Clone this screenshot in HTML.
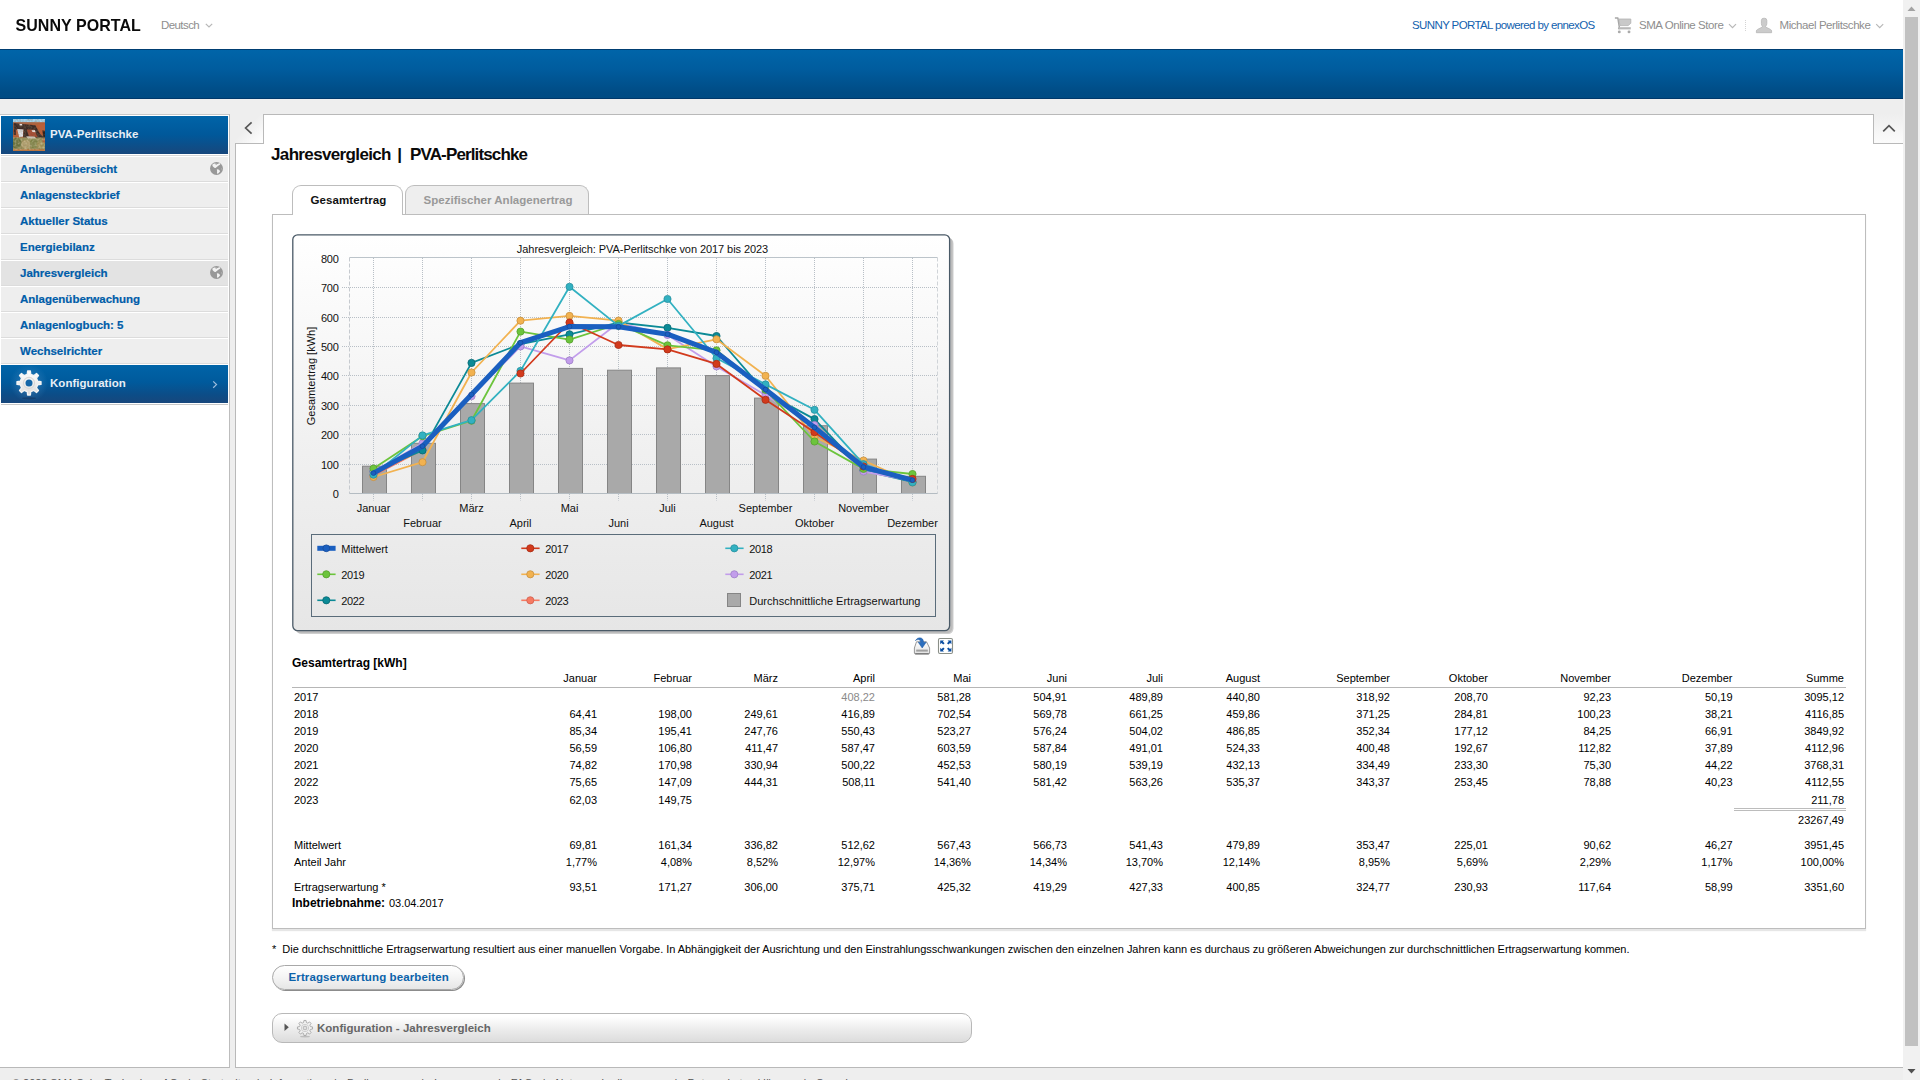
<!DOCTYPE html>
<html lang="de">
<head>
<meta charset="utf-8">
<title>Sunny Portal</title>
<style>
*{box-sizing:border-box;margin:0;padding:0}
html,body{width:1920px;height:1080px;overflow:hidden;background:#eee}
body{position:relative;font-family:"Liberation Sans",sans-serif;font-size:11px;color:#000}
.abs{position:absolute}
/* top header */
#top{position:absolute;left:0;top:0;width:1903px;height:49px;background:#fff}
#bluebar{position:absolute;left:0;top:49px;width:1903px;height:50px;background:linear-gradient(#0065a9 0%,#005c9e 40%,#004c85 88%,#004b83 100%);border-top:1px solid #003e72;border-bottom:1px solid #00386a}
#logo{position:absolute;left:15.5px;top:16px;font-size:16px;font-weight:bold;color:#0a0a0a;letter-spacing:0.05px;line-height:20px;white-space:nowrap;transform:scaleY(1.03);transform-origin:0 15px}
.toptxt{position:absolute;top:18px;font-size:11.5px;line-height:14px;color:#8e8e8e;white-space:nowrap}
/* scrollbar */
#sb{position:absolute;left:1903px;top:0;width:17px;height:1080px;background:#f1f1f1}
#sbthumb{position:absolute;left:2px;top:17px;width:13px;height:1029px;background:#c1c1c1}
/* sidebar */
#side{position:absolute;left:0;top:114px;width:230px;height:954px;border-bottom:1px solid #b9b9b9;background:#fff;border-top:1px solid #c8c8c8;border-right:1px solid #bdbdbd}
#sidehead{position:absolute;left:1px;top:1px;width:227px;height:38px;background:linear-gradient(#0064a8 0%,#00589a 50%,#17477c 100%)}
#sidehead .t{position:absolute;left:49px;top:10px;font-size:11.5px;font-weight:bold;color:#e8eef5;line-height:16px;white-space:nowrap;letter-spacing:0.03px}
.mi{position:absolute;left:1px;width:227px;height:26px;background:#eee;border-top:1px solid #fff;border-bottom:1px solid #dcdcdc;font-weight:bold;font-size:11.5px;color:#005da9;line-height:24px;padding-left:19px;white-space:nowrap;letter-spacing:0px}
.mi.act{background:#e3e3e3}
.mi{-webkit-text-stroke:0.2px #005da9}
#konf{position:absolute;left:1px;top:250px;width:227px;height:38px;overflow:hidden;background:linear-gradient(#0064a8 0%,#005a9c 45%,#0d4c86 80%,#17477c 100%)}
#konf .t{position:absolute;left:49px;top:10px;font-size:11.5px;font-weight:bold;color:#e8eef5;line-height:16px;letter-spacing:0.03px}
/* main */
#main{position:absolute;left:235px;top:143px;width:1668px;height:925px;background:#fff;border-left:1px solid #b9b9b9;border-bottom:1px solid #b9b9b9}
#maintop{position:absolute;left:263px;top:114px;width:1611px;height:30px;background:#fff;border:1px solid #b9b9b9;border-bottom:none}
#notchL{position:absolute;left:235px;top:114px;width:28px;height:30px;background:linear-gradient(135deg,#eee 45%,#fff 100%);border-bottom:1px solid #b9b9b9}
#notchR{position:absolute;left:1874px;top:114px;width:29px;height:30px;background:linear-gradient(#eee,#fbfbfb);border-bottom:1px solid #b9b9b9}
#title{position:absolute;left:271px;top:144px;font-size:17px;font-weight:bold;color:#0a0a0a;line-height:22px;white-space:nowrap;letter-spacing:-0.53px}
.tab{position:absolute;top:185px;height:30px;border:1px solid #bdbdbd;border-bottom:none;border-radius:9px 9px 0 0;font-size:11.5px;font-weight:bold;line-height:28px;text-align:center;white-space:nowrap}
#panel{position:absolute;left:272px;top:214px;width:1594px;height:715px;border:1px solid #bdbdbd;background:#fff;box-shadow:0 2px 1px #e6e6e6}
.tr{position:absolute;left:0;width:1903px;height:14px;line-height:14px;font-size:11px}
.tr .lab{position:absolute;left:294px;white-space:nowrap}
.tr .c{position:absolute;white-space:nowrap;text-align:right}
.gray{color:#8a8a8a}
.globe{position:absolute;left:208px;top:4px}
</style>
</head>
<body>
<div id="top">
  <div id="logo">SUNNY PORTAL</div>
  <div class="toptxt" style="left:161px;letter-spacing:-0.58px">Deutsch</div>
  <div class="toptxt" style="left:1412px;color:#1261ae;letter-spacing:-0.61px">SUNNY PORTAL powered by ennexOS</div>
  <div class="toptxt" style="left:1639px;letter-spacing:-0.44px">SMA Online Store</div>
  <div class="toptxt" style="left:1779.5px;letter-spacing:-0.43px">Michael Perlitschke</div>
  <svg class="abs" style="left:1613px;top:15px" width="20" height="20" viewBox="0 0 20 20"><path d="M1.9 3.1 L4.9 3.1 L6.3 12 L5.6 14.2" fill="none" stroke="#a6a6a6" stroke-width="1.5" stroke-linejoin="round"/><path d="M5.7 4 L17.8 4 L17.8 8.3 L15.1 10.6 L7 10.6Z" fill="#c9c9c9" stroke="#b2b2b2" stroke-width="0.8"/><rect x="5.6" y="12.2" width="12.2" height="2.2" fill="#b8b8b8"/><circle cx="6.3" cy="16.9" r="1.45" fill="#aaa"/><circle cx="16" cy="16.9" r="1.45" fill="#aaa"/></svg>
  <svg class="abs" style="left:1727px;top:22px" width="11" height="8" viewBox="0 0 11 8"><path d="M2 2.2 L5.5 5.7 L9 2.2" fill="none" stroke="#b8b8b8" stroke-width="1.2"/></svg>
  <svg class="abs" style="left:1874px;top:22px" width="11" height="8" viewBox="0 0 11 8"><path d="M2.2 2.2 L5.7 5.7 L9.2 2.2" fill="none" stroke="#b8b8b8" stroke-width="1.2"/></svg>
  <svg class="abs" style="left:204px;top:22px" width="11" height="8" viewBox="0 0 11 8"><path d="M1.8 1.8 L5 5 L8.2 1.8" fill="none" stroke="#b8b8b8" stroke-width="1.2"/></svg>
  <div class="abs" style="left:1745px;top:20px;width:1px;height:12px;background:repeating-linear-gradient(#d4d4d4 0 1px,transparent 1px 2px)"></div>
  <svg class="abs" style="left:1755px;top:17px" width="18" height="17" viewBox="0 0 18 17"><path d="M6.4 3.2 Q6.4 1.2 9.1 1.2 Q11.8 1.2 11.8 3.2 L11.8 6.6 Q11.8 8.4 10.6 9.2 L10.6 10 L15.4 12.4 Q16.6 13 16.6 14 L16.6 15.7 L1.4 15.7 L1.4 14 Q1.4 13 2.6 12.4 L7.4 10 L7.4 9.2 Q6.4 8.4 6.4 6.6Z" fill="#cbcbcb" stroke="#b6b6b6" stroke-width="0.8"/></svg>

</div>
<div id="bluebar"></div>

<div id="side">
  <div id="sidehead"><svg width="32" height="32" viewBox="0 0 32 32" style="position:absolute;left:12px;top:3px"><defs><filter id="tb" x="-10%" y="-10%" width="120%" height="120%"><feGaussianBlur stdDeviation="0.75"/></filter><filter id="tn" x="0" y="0" width="100%" height="100%"><feTurbulence type="fractalNoise" baseFrequency="0.45" numOctaves="2" seed="7"/><feColorMatrix type="matrix" values="0 0 0 0 0.25  0 0 0 0 0.2  0 0 0 0 0.1  1.6 0 0 0 -0.55"/></filter><filter id="tn2" x="0" y="0" width="100%" height="100%"><feTurbulence type="fractalNoise" baseFrequency="0.5" numOctaves="2" seed="3"/><feColorMatrix type="matrix" values="0 0 0 0 0.85  0 0 0 0 0.78  0 0 0 0 0.6  0 1.6 0 0 -0.6"/></filter><clipPath id="tc"><rect width="32" height="32"/></clipPath></defs><g clip-path="url(#tc)"><g filter="url(#tb)"><rect x="-2" y="-2" width="36" height="36" fill="#b95c36"/><rect x="-2" y="-2" width="36" height="5.2" fill="#a8d5f0"/><rect x="-2" y="3.2" width="24" height="1.2" fill="#a87058"/><path d="M0.6 4 L22.4 6.2 L27 14.8 L33 20 L33 23 L24 19.5 L13.4 19 L10.4 10.8 L2.8 10.6 L2.8 16 L0.6 16Z" fill="#3c2a28"/><path d="M13.8 10.4 L21.4 10.8 L24.6 18 L16 17.6Z" fill="#a64a30"/><path d="M6.4 4.8 L9 5 L9.3 6.6 L6.7 6.4Z" fill="#f4ecec"/><path d="M18.6 10.9 L22 11.2 L22.6 13.2 L19.4 13Z" fill="#f0e6e6"/><path d="M4.2 9.9 L10.5 10.5 L10 17.6 L6.2 18.4Z" fill="#e2e2e8"/><path d="M10.6 10.8 L13.4 18.8 L10.2 18.5Z" fill="#2c2020"/><path d="M24.5 5.2 L33 5.2 L33 17.5 L28.2 15Z" fill="#c25c34"/><path d="M29.4 11.2 L32.5 12 L32.5 19.5 L30.2 18.6Z" fill="#30201a"/><rect x="-2" y="18.6" width="36" height="14" fill="#928a52"/><ellipse cx="3.5" cy="24" rx="5" ry="5.5" fill="#66703a"/><ellipse cx="13" cy="25.5" rx="4.6" ry="4.5" fill="#b09e6c"/><ellipse cx="21" cy="24.5" rx="4" ry="5" fill="#7c8244"/><ellipse cx="28" cy="26" rx="4.5" ry="4" fill="#a09254"/><ellipse cx="31.5" cy="21.5" rx="2.2" ry="2.6" fill="#b0643c"/><rect x="-2" y="30.3" width="36" height="3" fill="#c4743e"/><path d="M13.2 17.2 L21.5 17.6 L23 19.4 L14.6 19.6Z" fill="#d6ccc0"/></g><rect width="32" height="32" filter="url(#tn)" opacity="0.55"/><rect y="18" width="32" height="13" filter="url(#tn2)" opacity="0.5"/></g></svg><div class="t">PVA-Perlitschke</div></div>
  <div class="mi" style="top:41px">Anlagenübersicht<svg class="globe" width="15" height="15" viewBox="-7.5 -7.5 15 15"><circle r="6.5" fill="#989898"/><path d="M-4.3-3.7 L-2.4-4.9 L1.2-4.6 L3-5.4 L3.8-3.9 L1.8-2.8 L-0.9-0.5 L-2.3-0.8 L-3.8-2.3Z" fill="#f2f2f2"/><ellipse cx="-0.2" cy="-4.2" rx="1.1" ry="0.45" fill="#a8a8a8"/><path d="M0.3 0.9 L1.5 0.7 L2.6 1.6 L3.6 2.4 L3.3 3.3 L2.2 4.4 L1 5.5 L0.5 4.2 L0.6 2.6Z" fill="#f2f2f2"/><circle cx="5.1" cy="0.4" r="0.6" fill="#b8b8b8"/></svg></div>
  <div class="mi" style="top:67px">Anlagensteckbrief</div>
  <div class="mi" style="top:93px">Aktueller Status</div>
  <div class="mi" style="top:119px">Energiebilanz</div>
  <div class="mi act" style="top:145px">Jahresvergleich<svg class="globe" width="15" height="15" viewBox="-7.5 -7.5 15 15"><circle r="6.5" fill="#989898"/><path d="M-4.3-3.7 L-2.4-4.9 L1.2-4.6 L3-5.4 L3.8-3.9 L1.8-2.8 L-0.9-0.5 L-2.3-0.8 L-3.8-2.3Z" fill="#f2f2f2"/><ellipse cx="-0.2" cy="-4.2" rx="1.1" ry="0.45" fill="#a8a8a8"/><path d="M0.3 0.9 L1.5 0.7 L2.6 1.6 L3.6 2.4 L3.3 3.3 L2.2 4.4 L1 5.5 L0.5 4.2 L0.6 2.6Z" fill="#f2f2f2"/><circle cx="5.1" cy="0.4" r="0.6" fill="#b8b8b8"/></svg></div>
  <div class="mi" style="top:171px">Anlagenüberwachung</div>
  <div class="mi" style="top:197px">Anlagenlogbuch: 5</div>
  <div class="mi" style="top:223px">Wechselrichter</div>
  <div class="abs" style="left:1px;top:40px;width:227px;height:1px;background:#d8d8d8"></div><div class="abs" style="left:1px;top:289px;width:227px;height:1px;background:#c8c8c8"></div><div id="konf"><svg width="40" height="40" viewBox="-20 -20 40 40" style="position:absolute;left:8px;top:-2px"><defs><radialGradient id="gg"><stop offset="0" stop-color="#5a9ad0" stop-opacity="0.55"/><stop offset="1" stop-color="#5a9ad0" stop-opacity="0"/></radialGradient><linearGradient id="gw" x1="0" y1="0" x2="0" y2="1"><stop offset="0" stop-color="#ffffff"/><stop offset="1" stop-color="#dcdcdc"/></linearGradient></defs><circle r="19" fill="url(#gg)"/><ellipse cx="0" cy="15.3" rx="7" ry="1.1" fill="#123a66" opacity="0.7"/><path d="M-1.77 -8.72 L-1.39 -12.02 L1.39 -12.02 L1.77 -8.72 L4.92 -7.42 L7.52 -9.48 L9.48 -7.52 L7.42 -4.92 L8.72 -1.77 L12.02 -1.39 L12.02 1.39 L8.72 1.77 L7.42 4.92 L9.48 7.52 L7.52 9.48 L4.92 7.42 L1.77 8.72 L1.39 12.02 L-1.39 12.02 L-1.77 8.72 L-4.92 7.42 L-7.52 9.48 L-9.48 7.52 L-7.42 4.92 L-8.72 1.77 L-12.02 1.39 L-12.02 -1.39 L-8.72 -1.77 L-7.42 -4.92 L-9.48 -7.52 L-7.52 -9.48 L-4.92 -7.42Z" fill="url(#gw)" stroke="#f4f4f4" stroke-width="1.3" stroke-linejoin="round"/><circle r="5.6" fill="none" stroke="#d8d8d8" stroke-width="1.1"/><circle r="3.5" fill="#1466a8"/></svg><div class="t">Konfiguration</div><svg width="8" height="12" style="position:absolute;left:210px;top:13px"><path d="M2.2 3.4 L5.5 6.6 L2.2 9.8" fill="none" stroke="#9dbcdc" stroke-width="1.25"/></svg></div>
</div>

<div id="main"></div><div id="maintop"></div>
<div id="notchL"><svg width="28" height="29" style="position:absolute;left:0;top:0"><path d="M16.6 8.4 L10.6 14 L16.6 19.6" fill="none" stroke="#555" stroke-width="1.7"/></svg></div>
<div id="notchR"><svg width="29" height="29" style="position:absolute;left:0;top:0"><path d="M9.2 17.3 L15 11.6 L20.8 17.3" fill="none" stroke="#555" stroke-width="1.7"/></svg></div>
<div id="title"><span style="letter-spacing:-0.64px">Jahresvergleich</span><span style="position:absolute;left:126.3px;top:0">|</span><span style="position:absolute;left:139px;top:0;letter-spacing:-0.86px">PVA-Perlitschke</span></div>
<div id="panel"></div>
<div class="tab" style="left:292px;width:111px;background:#fff;color:#111;height:30px;letter-spacing:0.1px;padding-left:2px">Gesamtertrag</div>
<div class="tab" style="left:405px;width:184px;background:#eee;color:#999;height:29px;letter-spacing:0.02px;padding-left:2px">Spezifischer Anlagenertrag</div>

<svg width="664" height="402" viewBox="0 0 664 402" style="position:absolute;left:292px;top:234px;font-family:'Liberation Sans',sans-serif;font-size:11px">
<defs><linearGradient id="cbg" x1="0" y1="0" x2="0" y2="1"><stop offset="0" stop-color="#ffffff"/><stop offset="0.55" stop-color="#f0f0f0"/><stop offset="1" stop-color="#e6e6e6"/></linearGradient></defs>
<rect x="4" y="4" width="657.5" height="396" rx="5.5" fill="#cecece"/><rect x="3" y="3" width="657.5" height="396" rx="5.5" fill="#bcbcbc"/>
<rect x="0.8" y="0.8" width="656.8" height="395.8" rx="4.8" fill="url(#cbg)" stroke="#4a5a67" stroke-width="1.3"/>
<g stroke="#b8bfc6" stroke-width="1" stroke-dasharray="1 1" fill="none"><line x1="50" y1="230.5" x2="645.5" y2="230.5"/><line x1="50" y1="200.5" x2="645.5" y2="200.5"/><line x1="50" y1="171.5" x2="645.5" y2="171.5"/><line x1="50" y1="141.5" x2="645.5" y2="141.5"/><line x1="50" y1="112.5" x2="645.5" y2="112.5"/><line x1="50" y1="83.5" x2="645.5" y2="83.5"/><line x1="50" y1="53.5" x2="645.5" y2="53.5"/><line x1="81.5" y1="24" x2="81.5" y2="266.5"/><line x1="130.5" y1="24" x2="130.5" y2="266.5"/><line x1="179.5" y1="24" x2="179.5" y2="266.5"/><line x1="228.5" y1="24" x2="228.5" y2="266.5"/><line x1="277.5" y1="24" x2="277.5" y2="266.5"/><line x1="326.5" y1="24" x2="326.5" y2="266.5"/><line x1="375.5" y1="24" x2="375.5" y2="266.5"/><line x1="424.5" y1="24" x2="424.5" y2="266.5"/><line x1="473.5" y1="24" x2="473.5" y2="266.5"/><line x1="522.5" y1="24" x2="522.5" y2="266.5"/><line x1="571.5" y1="24" x2="571.5" y2="266.5"/><line x1="620.5" y1="24" x2="620.5" y2="266.5"/></g>
<line x1="57.5" y1="23.5" x2="645.5" y2="23.5" stroke="#bcc4ca" stroke-width="1"/>
<line x1="645.5" y1="23.5" x2="645.5" y2="259.5" stroke="#d0d4d8" stroke-width="1" stroke-dasharray="4 2"/>
<line x1="57.5" y1="23.5" x2="57.5" y2="259.5" stroke="#c6cacf" stroke-width="1" stroke-dasharray="4 2"/>
<g fill="#a9a9a9" stroke="#858585" stroke-width="1"><rect x="70.5" y="232.2" width="24" height="27.3"/><rect x="119.5" y="209.3" width="24" height="50.2"/><rect x="168.5" y="169.6" width="24" height="89.9"/><rect x="217.5" y="149.1" width="24" height="110.4"/><rect x="266.5" y="134.4" width="24" height="125.1"/><rect x="315.5" y="136.2" width="24" height="123.3"/><rect x="364.5" y="133.9" width="24" height="125.6"/><rect x="413.5" y="141.6" width="24" height="117.9"/><rect x="462.5" y="164.1" width="24" height="95.4"/><rect x="511.5" y="191.7" width="24" height="67.8"/><rect x="560.5" y="225.1" width="24" height="34.4"/><rect x="609.5" y="242.3" width="24" height="17.2"/></g>
<line x1="57.5" y1="259.5" x2="645.5" y2="259.5" stroke="#b4bcc2" stroke-width="1"/>
<polyline fill="none" stroke="#f67a62" stroke-width="1.8" stroke-linejoin="round" points="81.5,241.4 130.5,215.6"/>
<g fill="#f67a62" stroke="#d06050" stroke-width="0.8"><circle cx="81.5" cy="241.4" r="3.6"/><circle cx="130.5" cy="215.6" r="3.6"/></g>
<polyline fill="none" stroke="#0b8a96" stroke-width="1.8" stroke-linejoin="round" points="81.5,237.4 130.5,216.4 179.5,128.9 228.5,110.1 277.5,100.3 326.5,88.5 375.5,93.8 424.5,102.0 473.5,158.6 522.5,185.1 571.5,236.5 620.5,247.9"/>
<g fill="#0b8a96" stroke="#086a74" stroke-width="0.8"><circle cx="81.5" cy="237.4" r="3.6"/><circle cx="130.5" cy="216.4" r="3.6"/><circle cx="179.5" cy="128.9" r="3.6"/><circle cx="228.5" cy="110.1" r="3.6"/><circle cx="277.5" cy="100.3" r="3.6"/><circle cx="326.5" cy="88.5" r="3.6"/><circle cx="375.5" cy="93.8" r="3.6"/><circle cx="424.5" cy="102.0" r="3.6"/><circle cx="473.5" cy="158.6" r="3.6"/><circle cx="522.5" cy="185.1" r="3.6"/><circle cx="571.5" cy="236.5" r="3.6"/><circle cx="620.5" cy="247.9" r="3.6"/></g>
<polyline fill="none" stroke="#c29deb" stroke-width="1.8" stroke-linejoin="round" points="81.5,237.7 130.5,209.3 179.5,162.2 228.5,112.4 277.5,126.4 326.5,88.8 375.5,100.9 424.5,132.4 473.5,161.2 522.5,191.0 571.5,237.5 620.5,246.7"/>
<g fill="#c29deb" stroke="#a080c8" stroke-width="0.8"><circle cx="81.5" cy="237.7" r="3.6"/><circle cx="130.5" cy="209.3" r="3.6"/><circle cx="179.5" cy="162.2" r="3.6"/><circle cx="228.5" cy="112.4" r="3.6"/><circle cx="277.5" cy="126.4" r="3.6"/><circle cx="326.5" cy="88.8" r="3.6"/><circle cx="375.5" cy="100.9" r="3.6"/><circle cx="424.5" cy="132.4" r="3.6"/><circle cx="473.5" cy="161.2" r="3.6"/><circle cx="522.5" cy="191.0" r="3.6"/><circle cx="571.5" cy="237.5" r="3.6"/><circle cx="620.5" cy="246.7" r="3.6"/></g>
<polyline fill="none" stroke="#f2b250" stroke-width="1.8" stroke-linejoin="round" points="81.5,243.0 130.5,228.2 179.5,138.5 228.5,86.7 277.5,81.9 326.5,86.6 375.5,115.1 424.5,105.3 473.5,141.8 522.5,203.0 571.5,226.5 620.5,248.5"/>
<g fill="#f2b250" stroke="#c89040" stroke-width="0.8"><circle cx="81.5" cy="243.0" r="3.6"/><circle cx="130.5" cy="228.2" r="3.6"/><circle cx="179.5" cy="138.5" r="3.6"/><circle cx="228.5" cy="86.7" r="3.6"/><circle cx="277.5" cy="81.9" r="3.6"/><circle cx="326.5" cy="86.6" r="3.6"/><circle cx="375.5" cy="115.1" r="3.6"/><circle cx="424.5" cy="105.3" r="3.6"/><circle cx="473.5" cy="141.8" r="3.6"/><circle cx="522.5" cy="203.0" r="3.6"/><circle cx="571.5" cy="226.5" r="3.6"/><circle cx="620.5" cy="248.5" r="3.6"/></g>
<polyline fill="none" stroke="#6cc43c" stroke-width="1.8" stroke-linejoin="round" points="81.5,234.6 130.5,202.2 179.5,186.7 228.5,97.6 277.5,105.6 326.5,90.0 375.5,111.3 424.5,116.3 473.5,155.9 522.5,207.5 571.5,234.9 620.5,240.0"/>
<g fill="#6cc43c" stroke="#55a02c" stroke-width="0.8"><circle cx="81.5" cy="234.6" r="3.6"/><circle cx="130.5" cy="202.2" r="3.6"/><circle cx="179.5" cy="186.7" r="3.6"/><circle cx="228.5" cy="97.6" r="3.6"/><circle cx="277.5" cy="105.6" r="3.6"/><circle cx="326.5" cy="90.0" r="3.6"/><circle cx="375.5" cy="111.3" r="3.6"/><circle cx="424.5" cy="116.3" r="3.6"/><circle cx="473.5" cy="155.9" r="3.6"/><circle cx="522.5" cy="207.5" r="3.6"/><circle cx="571.5" cy="234.9" r="3.6"/><circle cx="620.5" cy="240.0" r="3.6"/></g>
<polyline fill="none" stroke="#32b1c1" stroke-width="1.8" stroke-linejoin="round" points="81.5,240.7 130.5,201.4 179.5,186.2 228.5,136.9 277.5,52.8 326.5,91.9 375.5,65.0 424.5,124.3 473.5,150.4 522.5,175.8 571.5,230.2 620.5,248.4"/>
<g fill="#32b1c1" stroke="#2790a0" stroke-width="0.8"><circle cx="81.5" cy="240.7" r="3.6"/><circle cx="130.5" cy="201.4" r="3.6"/><circle cx="179.5" cy="186.2" r="3.6"/><circle cx="228.5" cy="136.9" r="3.6"/><circle cx="277.5" cy="52.8" r="3.6"/><circle cx="326.5" cy="91.9" r="3.6"/><circle cx="375.5" cy="65.0" r="3.6"/><circle cx="424.5" cy="124.3" r="3.6"/><circle cx="473.5" cy="150.4" r="3.6"/><circle cx="522.5" cy="175.8" r="3.6"/><circle cx="571.5" cy="230.2" r="3.6"/><circle cx="620.5" cy="248.4" r="3.6"/></g>
<polyline fill="none" stroke="#d23a1c" stroke-width="1.8" stroke-linejoin="round" points="228.5,139.5 277.5,88.5 326.5,111.0 375.5,115.4 424.5,129.9 473.5,165.8 522.5,198.2 571.5,232.5 620.5,244.9"/>
<g fill="#d23a1c" stroke="#a82c14" stroke-width="0.8"><circle cx="228.5" cy="139.5" r="3.6"/><circle cx="277.5" cy="88.5" r="3.6"/><circle cx="326.5" cy="111.0" r="3.6"/><circle cx="375.5" cy="115.4" r="3.6"/><circle cx="424.5" cy="129.9" r="3.6"/><circle cx="473.5" cy="165.8" r="3.6"/><circle cx="522.5" cy="198.2" r="3.6"/><circle cx="571.5" cy="232.5" r="3.6"/><circle cx="620.5" cy="244.9" r="3.6"/></g>
<polyline fill="none" stroke="#1a5fc0" stroke-width="5" stroke-linejoin="round" points="81.5,239.1 130.5,212.2 179.5,160.5 228.5,108.7 277.5,92.6 326.5,92.8 375.5,100.2 424.5,118.4 473.5,155.6 522.5,193.4 571.5,233.0 620.5,246.1"/>
<g fill="#1a5fc0" stroke="#154a9a" stroke-width="0.8"><circle cx="81.5" cy="239.1" r="2.4"/><circle cx="130.5" cy="212.2" r="2.4"/><circle cx="179.5" cy="160.5" r="2.4"/><circle cx="228.5" cy="108.7" r="2.4"/><circle cx="277.5" cy="92.6" r="2.4"/><circle cx="326.5" cy="92.8" r="2.4"/><circle cx="375.5" cy="100.2" r="2.4"/><circle cx="424.5" cy="118.4" r="2.4"/><circle cx="473.5" cy="155.6" r="2.4"/><circle cx="522.5" cy="193.4" r="2.4"/><circle cx="571.5" cy="233.0" r="2.4"/><circle cx="620.5" cy="246.1" r="2.4"/></g>
<text x="350.5" y="19" text-anchor="middle" fill="#111" letter-spacing="-0.07">Jahresvergleich: PVA-Perlitschke von 2017 bis 2023</text>
<text x="46.5" y="264.2" text-anchor="end" fill="#111" letter-spacing="-0.3">0</text>
<text x="46.5" y="234.8" text-anchor="end" fill="#111" letter-spacing="-0.3">100</text>
<text x="46.5" y="205.3" text-anchor="end" fill="#111" letter-spacing="-0.3">200</text>
<text x="46.5" y="175.9" text-anchor="end" fill="#111" letter-spacing="-0.3">300</text>
<text x="46.5" y="146.4" text-anchor="end" fill="#111" letter-spacing="-0.3">400</text>
<text x="46.5" y="116.9" text-anchor="end" fill="#111" letter-spacing="-0.3">500</text>
<text x="46.5" y="87.5" text-anchor="end" fill="#111" letter-spacing="-0.3">600</text>
<text x="46.5" y="58.1" text-anchor="end" fill="#111" letter-spacing="-0.3">700</text>
<text x="46.5" y="28.6" text-anchor="end" fill="#111" letter-spacing="-0.3">800</text>
<text transform="translate(22.5,142) rotate(-90)" text-anchor="middle" fill="#111">Gesamtertrag [kWh]</text>
<text x="81.5" y="278" text-anchor="middle" fill="#111">Januar</text>
<text x="130.5" y="293" text-anchor="middle" fill="#111">Februar</text>
<text x="179.5" y="278" text-anchor="middle" fill="#111">März</text>
<text x="228.5" y="293" text-anchor="middle" fill="#111">April</text>
<text x="277.5" y="278" text-anchor="middle" fill="#111">Mai</text>
<text x="326.5" y="293" text-anchor="middle" fill="#111">Juni</text>
<text x="375.5" y="278" text-anchor="middle" fill="#111">Juli</text>
<text x="424.5" y="293" text-anchor="middle" fill="#111">August</text>
<text x="473.5" y="278" text-anchor="middle" fill="#111">September</text>
<text x="522.5" y="293" text-anchor="middle" fill="#111">Oktober</text>
<text x="571.5" y="278" text-anchor="middle" fill="#111">November</text>
<text x="620.5" y="293" text-anchor="middle" fill="#111">Dezember</text>
<rect x="19.5" y="300.5" width="624" height="82" fill="none" stroke="#5a6c7a" stroke-width="1"/>
<line x1="25.30000000000001" y1="314.29999999999995" x2="43.60000000000001" y2="314.29999999999995" stroke="#1a5fc0" stroke-width="5"/>
<circle cx="34.30000000000001" cy="314.29999999999995" r="3.4" fill="#1a5fc0" stroke="#154a9a" stroke-width="0.8"/>
<text x="49.30000000000001" y="318.49999999999994" fill="#111" letter-spacing="-0.05">Mittelwert</text>
<line x1="229.29999999999995" y1="314.29999999999995" x2="247.59999999999997" y2="314.29999999999995" stroke="#d23a1c" stroke-width="1.6"/>
<circle cx="238.29999999999995" cy="314.29999999999995" r="3.6" fill="#d23a1c" stroke="#a82c14" stroke-width="0.8"/>
<text x="253.29999999999995" y="318.49999999999994" fill="#111" letter-spacing="-0.35">2017</text>
<line x1="433.29999999999995" y1="314.29999999999995" x2="451.59999999999997" y2="314.29999999999995" stroke="#32b1c1" stroke-width="1.6"/>
<circle cx="442.29999999999995" cy="314.29999999999995" r="3.6" fill="#32b1c1" stroke="#2790a0" stroke-width="0.8"/>
<text x="457.29999999999995" y="318.49999999999994" fill="#111" letter-spacing="-0.35">2018</text>
<line x1="25.30000000000001" y1="340.29999999999995" x2="43.60000000000001" y2="340.29999999999995" stroke="#6cc43c" stroke-width="1.6"/>
<circle cx="34.30000000000001" cy="340.29999999999995" r="3.6" fill="#6cc43c" stroke="#55a02c" stroke-width="0.8"/>
<text x="49.30000000000001" y="344.49999999999994" fill="#111" letter-spacing="-0.35">2019</text>
<line x1="229.29999999999995" y1="340.29999999999995" x2="247.59999999999997" y2="340.29999999999995" stroke="#f2b250" stroke-width="1.6"/>
<circle cx="238.29999999999995" cy="340.29999999999995" r="3.6" fill="#f2b250" stroke="#c89040" stroke-width="0.8"/>
<text x="253.29999999999995" y="344.49999999999994" fill="#111" letter-spacing="-0.35">2020</text>
<line x1="433.29999999999995" y1="340.29999999999995" x2="451.59999999999997" y2="340.29999999999995" stroke="#c29deb" stroke-width="1.6"/>
<circle cx="442.29999999999995" cy="340.29999999999995" r="3.6" fill="#c29deb" stroke="#a080c8" stroke-width="0.8"/>
<text x="457.29999999999995" y="344.49999999999994" fill="#111" letter-spacing="-0.35">2021</text>
<line x1="25.30000000000001" y1="366.29999999999995" x2="43.60000000000001" y2="366.29999999999995" stroke="#0b8a96" stroke-width="1.6"/>
<circle cx="34.30000000000001" cy="366.29999999999995" r="3.6" fill="#0b8a96" stroke="#086a74" stroke-width="0.8"/>
<text x="49.30000000000001" y="370.49999999999994" fill="#111" letter-spacing="-0.35">2022</text>
<line x1="229.29999999999995" y1="366.29999999999995" x2="247.59999999999997" y2="366.29999999999995" stroke="#f67a62" stroke-width="1.6"/>
<circle cx="238.29999999999995" cy="366.29999999999995" r="3.6" fill="#f67a62" stroke="#d06050" stroke-width="0.8"/>
<text x="253.29999999999995" y="370.49999999999994" fill="#111" letter-spacing="-0.35">2023</text>
<rect x="435.5" y="359.5" width="13" height="13" fill="#a9a9a9" stroke="#858585" stroke-width="1"/>
<text x="457.29999999999995" y="370.49999999999994" fill="#111">Durchschnittliche Ertragserwartung</text>
</svg>


<svg class="abs" style="left:913px;top:636px" width="19" height="20" viewBox="0 0 19 20"><defs><linearGradient id="tr" x1="0" y1="0" x2="0" y2="1"><stop offset="0" stop-color="#ffffff"/><stop offset="1" stop-color="#e2e2e2"/></linearGradient></defs><path d="M3.5 5.8 L13.5 5.8 L16.6 12 L16.6 17 Q16.6 17.8 15.8 17.8 L2.2 17.8 Q1.4 17.8 1.4 17 L1.4 12Z" fill="url(#tr)" stroke="#8c8c8c" stroke-width="0.9"/><rect x="3.2" y="13.6" width="11.6" height="2" fill="#a0a0a0"/><path d="M2.2 17.9 L15.8 17.9" stroke="#606060" stroke-width="1"/><path d="M2.3 4.6 Q4.5 0.8 8.2 2 Q10.6 3 10.6 6.2 L13.2 6.2 L9.2 12 L5.2 6.2 L7.8 6.2 Q7.6 3.6 5.4 3.6 Q3.6 3.6 2.3 4.6Z" fill="#2c6fbe" stroke="#1a56a0" stroke-width="0.5"/></svg>
<svg class="abs" style="left:937px;top:637px" width="18" height="18" viewBox="0 0 18 18"><rect x="1.5" y="1.5" width="14" height="15" rx="1.4" fill="#fff" stroke="#8a8f88" stroke-width="1.1"/><g fill="#0b4ea2"><path d="M3.2 3.4 L7 3.4 L5.9 4.5 L7.6 6.2 L6.2 7.6 L4.5 5.9 L3.2 7.2Z"/><path d="M14.4 3.4 L14.4 7.2 L13.1 5.9 L11.4 7.6 L10 6.2 L11.7 4.5 L10.6 3.4Z"/><path d="M3.2 14.6 L3.2 10.8 L4.5 12.1 L6.2 10.4 L7.6 11.8 L5.9 13.5 L7 14.6Z"/><path d="M14.4 14.6 L10.6 14.6 L11.7 13.5 L10 11.8 L11.4 10.4 L13.1 12.1 L14.4 10.8Z"/></g></svg>
<div class="abs" style="left:292px;top:656px;font-size:12px;font-weight:bold;line-height:14px;white-space:nowrap">Gesamtertrag [kWh]</div>
<div class="abs" style="left:292px;top:687px;width:1554px;height:1px;background:#b6b6b6"></div><div class="abs" style="left:1734px;top:808px;width:112px;height:3px;border-top:1px solid #bcbcbc;border-bottom:1px solid #bcbcbc"></div>
<div class="tr" style="top:671px"><span class="lab"></span><span class="c" style="right:1306px">Januar</span><span class="c" style="right:1211px">Februar</span><span class="c" style="right:1125px">März</span><span class="c" style="right:1028px">April</span><span class="c" style="right:932px">Mai</span><span class="c" style="right:836px">Juni</span><span class="c" style="right:740px">Juli</span><span class="c" style="right:643px">August</span><span class="c" style="right:513px">September</span><span class="c" style="right:415px">Oktober</span><span class="c" style="right:292px">November</span><span class="c" style="right:170.5px">Dezember</span><span class="c" style="right:59px">Summe</span></div>
<div class="tr" style="top:690px"><span class="lab">2017</span><span class="c gray" style="right:1028px">408,22</span><span class="c" style="right:932px">581,28</span><span class="c" style="right:836px">504,91</span><span class="c" style="right:740px">489,89</span><span class="c" style="right:643px">440,80</span><span class="c" style="right:513px">318,92</span><span class="c" style="right:415px">208,70</span><span class="c" style="right:292px">92,23</span><span class="c" style="right:170.5px">50,19</span><span class="c" style="right:59px">3095,12</span></div>
<div class="tr" style="top:707px"><span class="lab">2018</span><span class="c" style="right:1306px">64,41</span><span class="c" style="right:1211px">198,00</span><span class="c" style="right:1125px">249,61</span><span class="c" style="right:1028px">416,89</span><span class="c" style="right:932px">702,54</span><span class="c" style="right:836px">569,78</span><span class="c" style="right:740px">661,25</span><span class="c" style="right:643px">459,86</span><span class="c" style="right:513px">371,25</span><span class="c" style="right:415px">284,81</span><span class="c" style="right:292px">100,23</span><span class="c" style="right:170.5px">38,21</span><span class="c" style="right:59px">4116,85</span></div>
<div class="tr" style="top:724px"><span class="lab">2019</span><span class="c" style="right:1306px">85,34</span><span class="c" style="right:1211px">195,41</span><span class="c" style="right:1125px">247,76</span><span class="c" style="right:1028px">550,43</span><span class="c" style="right:932px">523,27</span><span class="c" style="right:836px">576,24</span><span class="c" style="right:740px">504,02</span><span class="c" style="right:643px">486,85</span><span class="c" style="right:513px">352,34</span><span class="c" style="right:415px">177,12</span><span class="c" style="right:292px">84,25</span><span class="c" style="right:170.5px">66,91</span><span class="c" style="right:59px">3849,92</span></div>
<div class="tr" style="top:741px"><span class="lab">2020</span><span class="c" style="right:1306px">56,59</span><span class="c" style="right:1211px">106,80</span><span class="c" style="right:1125px">411,47</span><span class="c" style="right:1028px">587,47</span><span class="c" style="right:932px">603,59</span><span class="c" style="right:836px">587,84</span><span class="c" style="right:740px">491,01</span><span class="c" style="right:643px">524,33</span><span class="c" style="right:513px">400,48</span><span class="c" style="right:415px">192,67</span><span class="c" style="right:292px">112,82</span><span class="c" style="right:170.5px">37,89</span><span class="c" style="right:59px">4112,96</span></div>
<div class="tr" style="top:758px"><span class="lab">2021</span><span class="c" style="right:1306px">74,82</span><span class="c" style="right:1211px">170,98</span><span class="c" style="right:1125px">330,94</span><span class="c" style="right:1028px">500,22</span><span class="c" style="right:932px">452,53</span><span class="c" style="right:836px">580,19</span><span class="c" style="right:740px">539,19</span><span class="c" style="right:643px">432,13</span><span class="c" style="right:513px">334,49</span><span class="c" style="right:415px">233,30</span><span class="c" style="right:292px">75,30</span><span class="c" style="right:170.5px">44,22</span><span class="c" style="right:59px">3768,31</span></div>
<div class="tr" style="top:775px"><span class="lab">2022</span><span class="c" style="right:1306px">75,65</span><span class="c" style="right:1211px">147,09</span><span class="c" style="right:1125px">444,31</span><span class="c" style="right:1028px">508,11</span><span class="c" style="right:932px">541,40</span><span class="c" style="right:836px">581,42</span><span class="c" style="right:740px">563,26</span><span class="c" style="right:643px">535,37</span><span class="c" style="right:513px">343,37</span><span class="c" style="right:415px">253,45</span><span class="c" style="right:292px">78,88</span><span class="c" style="right:170.5px">40,23</span><span class="c" style="right:59px">4112,55</span></div>
<div class="tr" style="top:793px"><span class="lab">2023</span><span class="c" style="right:1306px">62,03</span><span class="c" style="right:1211px">149,75</span><span class="c" style="right:59px">211,78</span></div>
<div class="tr" style="top:813px"><span class="lab"></span><span class="c" style="right:59px">23267,49</span></div>
<div class="tr" style="top:838px"><span class="lab">Mittelwert</span><span class="c" style="right:1306px">69,81</span><span class="c" style="right:1211px">161,34</span><span class="c" style="right:1125px">336,82</span><span class="c" style="right:1028px">512,62</span><span class="c" style="right:932px">567,43</span><span class="c" style="right:836px">566,73</span><span class="c" style="right:740px">541,43</span><span class="c" style="right:643px">479,89</span><span class="c" style="right:513px">353,47</span><span class="c" style="right:415px">225,01</span><span class="c" style="right:292px">90,62</span><span class="c" style="right:170.5px">46,27</span><span class="c" style="right:59px">3951,45</span></div>
<div class="tr" style="top:855px"><span class="lab">Anteil Jahr</span><span class="c" style="right:1306px">1,77%</span><span class="c" style="right:1211px">4,08%</span><span class="c" style="right:1125px">8,52%</span><span class="c" style="right:1028px">12,97%</span><span class="c" style="right:932px">14,36%</span><span class="c" style="right:836px">14,34%</span><span class="c" style="right:740px">13,70%</span><span class="c" style="right:643px">12,14%</span><span class="c" style="right:513px">8,95%</span><span class="c" style="right:415px">5,69%</span><span class="c" style="right:292px">2,29%</span><span class="c" style="right:170.5px">1,17%</span><span class="c" style="right:59px">100,00%</span></div>
<div class="tr" style="top:880px"><span class="lab">Ertragserwartung *</span><span class="c" style="right:1306px">93,51</span><span class="c" style="right:1211px">171,27</span><span class="c" style="right:1125px">306,00</span><span class="c" style="right:1028px">375,71</span><span class="c" style="right:932px">425,32</span><span class="c" style="right:836px">419,29</span><span class="c" style="right:740px">427,33</span><span class="c" style="right:643px">400,85</span><span class="c" style="right:513px">324,77</span><span class="c" style="right:415px">230,93</span><span class="c" style="right:292px">117,64</span><span class="c" style="right:170.5px">58,99</span><span class="c" style="right:59px">3351,60</span></div>
<div class="abs" style="left:292px;top:896px;font-size:11px;line-height:14px;white-space:nowrap"><b style="font-size:12px;letter-spacing:-0.02px">Inbetriebnahme:</b><span style="margin-left:4px;letter-spacing:-0.05px">03.04.2017</span></div>

<div class="abs" style="left:272px;top:942px;font-size:11px;line-height:14px;white-space:nowrap;letter-spacing:-0.032px"><span style="letter-spacing:3px">*</span> Die durchschnittliche Ertragserwartung resultiert aus einer manuellen Vorgabe. In Abhängigkeit der Ausrichtung und den Einstrahlungsschwankungen zwischen den einzelnen Jahren kann es durchaus zu größeren Abweichungen zur durchschnittlichen Ertragserwartung kommen.</div>


<div class="abs" style="left:272px;top:965px;width:192px;height:25px;border:1px solid #a8a8a8;border-radius:13px;background:linear-gradient(#ffffff,#f4f4f4 50%,#e6e6e6);box-shadow:1px 1px 0 #8c8c8c;font-size:11.5px;font-weight:bold;color:#0b62aa;line-height:23px;padding-left:15.5px;letter-spacing:0.12px;white-space:nowrap">Ertragserwartung bearbeiten</div>
<div class="abs" style="left:272px;top:1013px;width:700px;height:30px;border:1px solid #b8b8b8;border-radius:10px;background:linear-gradient(#ffffff 10%,#ececec 55%,#dcdcdc);font-size:11.5px;font-weight:bold;color:#666;line-height:28px;padding-left:44px;letter-spacing:0.02px;white-space:nowrap">Konfiguration - Jahresvergleich
<svg width="6" height="9" style="position:absolute;left:11px;top:9.2px"><path d="M0.5 0.5 L4.8 4.2 L0.5 8Z" fill="#555"/></svg>
<svg width="20" height="20" viewBox="-10 -10 20 20" style="position:absolute;left:21.5px;top:3.5px"><ellipse cx="0" cy="8.6" rx="5" ry="0.9" fill="#bdbdbd"/><path d="M-1.39 -5.43 L-1.06 -7.53 L1.06 -7.53 L1.39 -5.43 L2.86 -4.82 L4.57 -6.07 L6.07 -4.57 L4.82 -2.86 L5.43 -1.39 L7.53 -1.06 L7.53 1.06 L5.43 1.39 L4.82 2.86 L6.07 4.57 L4.57 6.07 L2.86 4.82 L1.39 5.43 L1.06 7.53 L-1.06 7.53 L-1.39 5.43 L-2.86 4.82 L-4.57 6.07 L-6.07 4.57 L-4.82 2.86 L-5.43 1.39 L-7.53 1.06 L-7.53 -1.06 L-5.43 -1.39 L-4.82 -2.86 L-6.07 -4.57 L-4.57 -6.07 L-2.86 -4.82Z" fill="#f2f2f2" stroke="#a6a6a6" stroke-width="0.9" stroke-linejoin="round"/><circle r="3.7" fill="none" stroke="#c4c4c4" stroke-width="0.8"/><circle r="1.9" fill="#e0e0e0" stroke="#a8a8a8" stroke-width="0.8"/></svg>
</div>
<div class="abs" style="left:0;top:1068px;width:1903px;height:12px;background:#eee;overflow:hidden;font-size:11px;line-height:14px;color:#555;white-space:nowrap;padding-left:12px;padding-top:8px;letter-spacing:-0.05px">© 2023 SMA Solar Technology AG<span style="margin:0 10px">|</span>Startseite<span style="margin:0 10px">|</span>Information<span style="margin:0 10px">|</span>Bedingungen<span style="margin:0 10px">|</span>Impressum<span style="margin:0 10px">|</span>FAQ<span style="margin:0 10px">|</span>Nutzungsbedingungen<span style="margin:0 10px">|</span>Datenschutzerklärung<span style="margin:0 10px">|</span>Spenden</div>
<div id="sb"><div id="sbthumb"></div><svg width="17" height="17" style="position:absolute;left:0;top:0"><path d="M4.5 11 L8.5 6.5 L12.5 11Z" fill="#a3a3a3"/></svg><svg width="17" height="17" style="position:absolute;left:0;top:1063px"><path d="M4.5 6 L8.5 10.5 L12.5 6Z" fill="#505050"/></svg></div>
</body>
</html>
